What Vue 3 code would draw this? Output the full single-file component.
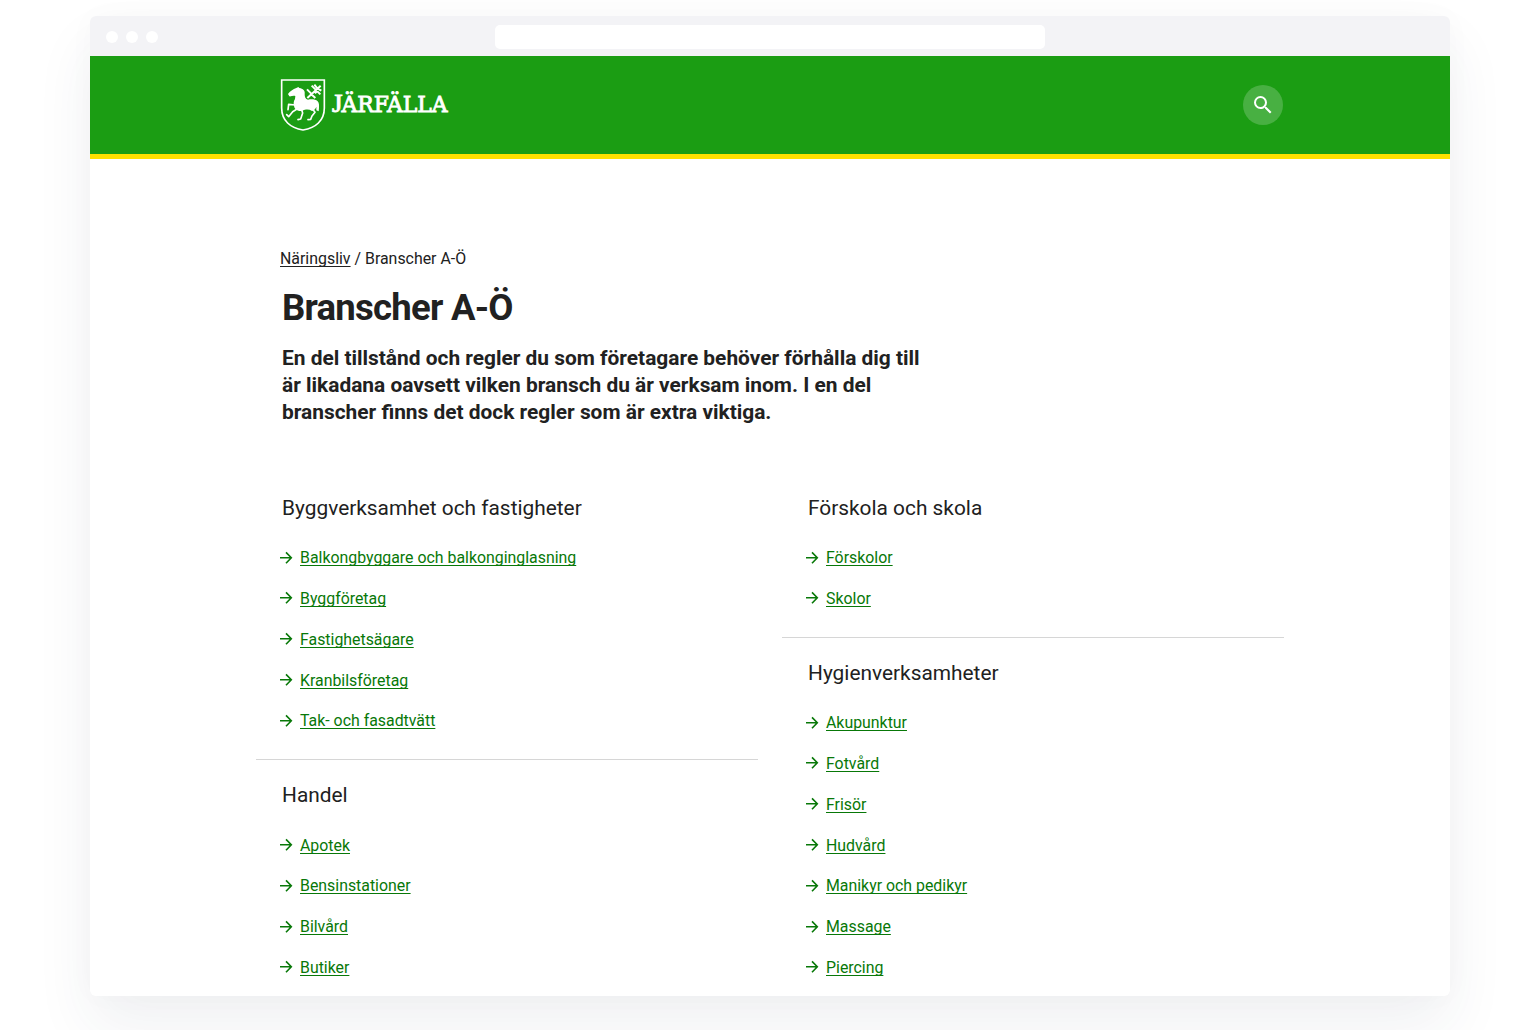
<script setup>
const columns = [
  [
    { title: 'Byggverksamhet och fastigheter', links: ['Balkongbyggare och balkonginglasning', 'Byggföretag', 'Fastighetsägare', 'Kranbilsföretag', 'Tak- och fasadtvätt'] },
    { title: 'Handel', links: ['Apotek', 'Bensinstationer', 'Bilvård', 'Butiker'] },
  ],
  [
    { title: 'Förskola och skola', links: ['Förskolor', 'Skolor'] },
    { title: 'Hygienverksamheter', links: ['Akupunktur', 'Fotvård', 'Frisör', 'Hudvård', 'Manikyr och pedikyr', 'Massage', 'Piercing'] },
  ],
]
</script>

<template>
  <div class="stage">
    <div class="window">
      <div class="chrome">
        <div class="dots"><i></i><i></i><i></i></div>
        <div class="address"></div>
      </div>
      <header class="header">
        <svg class="logo" width="180" height="64" viewBox="0 0 180 64" aria-label="Järfälla">
          <g transform="scale(.33333)">
            <path d="M20 24H148V108C148 146 122 168 84 174C46 168 20 146 20 108Z" fill="none" stroke="#fff" stroke-width="5" />
            <path d="M39 66C45 58 54 51 64 48L70 45L73 48C84 49 91 57 89 66C89 75 91 81 99 83C110 81 122 82 128 88C133 93 133 104 131 118L124 115V104C122 111 117 115 111 117C101 111 92 112 81 117C68 118 58 112 57 101C55 94 56 87 60 81L61 72C55 69 49 74 43 73Z" fill="#fff" />
            <g fill="none" stroke="#fff" stroke-width="5" stroke-linejoin="round" stroke-linecap="round">
              <path d="M61 99L41 97L39 113M66 111L53 119L41 134L35 128M80 114L83 123L77 141L69 143M113 112L120 121L111 132L107 142L99 143" />
              <path d="M97 78L137 41M110 41L136 67M96 52L108 64M108 66L121 78M118 38L127 49M128 50L139 56M120 64L128 56" stroke-width="6" stroke-linecap="butt" />
            </g>
          </g>
          <text class="initial" x="57" y="40" textLength="10.5" lengthAdjust="spacingAndGlyphs">J</text>
          <text x="66.5" y="40" textLength="106" lengthAdjust="spacingAndGlyphs">ÄRFÄLLA</text>
        </svg>
        <button class="search" aria-label="Sök">
          <svg width="24" height="24" viewBox="0 0 24 24"><path fill="#fff" d="M15.5 14h-.79l-.28-.27A6.47 6.47 0 0 0 16 9.5 6.5 6.5 0 1 0 9.5 16c1.61 0 3.09-.59 4.23-1.57l.27.28v.79l5 4.99L20.49 19zm-6 0C7.01 14 5 11.99 5 9.5S7.01 5 9.5 5 14 7.01 14 9.5 11.99 14 9.5 14" /></svg>
        </button>
      </header>
      <main>
        <nav class="crumbs"><a>Näringsliv</a> / Branscher A-Ö</nav>
        <h1>Branscher A-Ö</h1>
        <p class="intro">En del tillstånd och regler du som företagare behöver förhålla dig till<br>är likadana oavsett vilken bransch du är verksam inom. I en del<br>branscher finns det dock regler som är extra viktiga.</p>
        <div class="columns">
          <div v-for="(column, i) in columns" :key="i" class="column">
            <section v-for="group in column" :key="group.title">
              <h2>{{ group.title }}</h2>
              <ul>
                <li v-for="link in group.links" :key="link">
                  <svg width="14" height="14" viewBox="0 0 14 14"><path d="M0 6.8H11.3M6 1.4L11.3 6.8L6 12.2" fill="none" stroke="#087808" stroke-width="1.6" /></svg>
                  <a>{{ link }}</a>
                </li>
              </ul>
            </section>
          </div>
        </div>
      </main>
    </div>
  </div>
</template>

<style>
body { margin: 0; background: #fff; }
</style>

<style scoped>
* { box-sizing: border-box; }
.stage { height: 1030px; padding: 16px 90px 0; overflow: hidden; font-family: Roboto, sans-serif; color: #212121; }
.window { height: 980px; border-radius: 6px; background: #fff; overflow: hidden; box-shadow: 0 30px 60px rgba(45, 60, 85, .07), 0 0 30px rgba(0, 0, 0, .025); }
.chrome { height: 40px; background: #f3f3f6; display: grid; grid-template-columns: 405px 550px; align-items: center; }
.dots { display: flex; gap: 8px; padding: 2px 0 0 16px; }
.dots i { width: 12px; height: 12px; border-radius: 50%; background: #fff; }
.address { height: 24px; margin-top: 2px; border-radius: 5px; background: #fff; }
.header { height: 103px; background: #1b9d13; border-bottom: 5px solid #fee000; padding: 16px 167px 0 185px; display: flex; justify-content: space-between; }
.logo { display: block; }
.logo text { font-family: "DejaVu Serif", serif; font-size: 22.5px; fill: #fff; stroke: #fff; stroke-width: .9px; }
.logo .initial { font-family: "Liberation Serif", serif; font-size: 25px; }
.search { margin: 13px 0 0; padding: 0; width: 40px; height: 40px; border: 0; border-radius: 50%; background: #48b042; display: flex; align-items: center; justify-content: center; }
main { padding: 90px 166px 0; }
.crumbs { height: 20px; padding-left: 24px; font-size: 15.9px; line-height: 20px; white-space: nowrap; }
a { text-decoration: underline; text-decoration-thickness: 1px; text-underline-offset: 2px; text-decoration-skip-ink: none; }
h1 { margin: 17px 0 0 26px; font-size: 36.5px; line-height: 44px; font-weight: 700; letter-spacing: -.75px; }
.intro { margin: 15px 0 0 26px; font-size: 20.9px; line-height: 27px; font-weight: 700; white-space: nowrap; }
.columns { margin-top: 46.6px; display: grid; grid-template-columns: 502px 502px; column-gap: 24px; }
section { padding: 22.5px 0 17.8px; border-bottom: 1px solid #d6d6d6; }
h2 { margin: 0 0 16.1px 26px; font-size: 20.87px; line-height: 26px; font-weight: 400; }
ul { list-style: none; margin: 0; padding: 0 0 0 24px; }
li { height: 40.8px; display: flex; align-items: center; gap: 6px; font-size: 15.88px; line-height: 20px; color: #087808; }
li a { padding-top: 1.2px; }
</style>
